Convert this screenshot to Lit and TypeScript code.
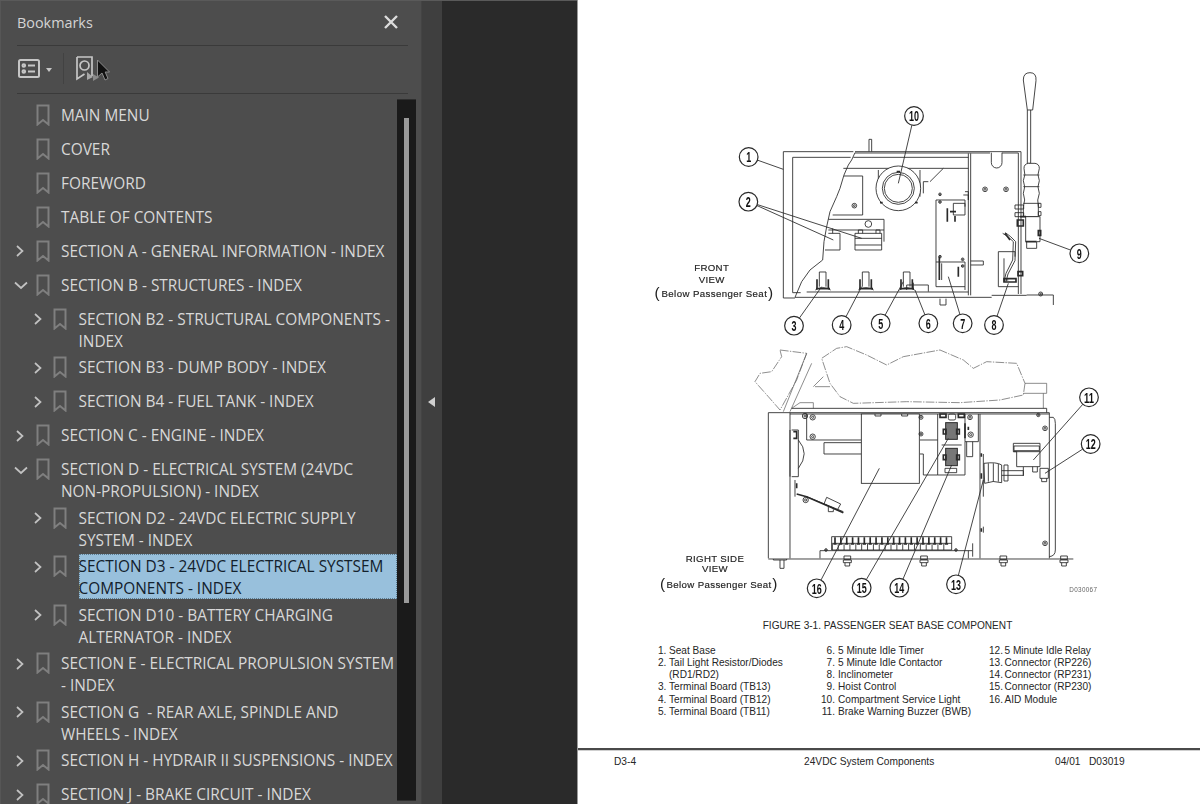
import { LitElement, html, svg, css } from 'lit';
import { customElement } from 'lit/decorators.js';

type Row = { label: string; level: 0 | 1; chevron?: 'right' | 'down'; selected?: boolean };

const rows: Row[] = [
  { label: 'MAIN MENU', level: 0 },
  { label: 'COVER', level: 0 },
  { label: 'FOREWORD', level: 0 },
  { label: 'TABLE OF CONTENTS', level: 0 },
  { label: 'SECTION A - GENERAL INFORMATION - INDEX', level: 0, chevron: 'right' },
  { label: 'SECTION B - STRUCTURES - INDEX', level: 0, chevron: 'down' },
  { label: 'SECTION B2 - STRUCTURAL COMPONENTS - INDEX', level: 1, chevron: 'right' },
  { label: 'SECTION B3 - DUMP BODY - INDEX', level: 1, chevron: 'right' },
  { label: 'SECTION B4 - FUEL TANK - INDEX', level: 1, chevron: 'right' },
  { label: 'SECTION C - ENGINE - INDEX', level: 0, chevron: 'right' },
  { label: 'SECTION D - ELECTRICAL SYSTEM (24VDC NON-\u2060PROPULSION) - INDEX', level: 0, chevron: 'down' },
  { label: 'SECTION D2 - 24VDC ELECTRIC SUPPLY SYSTEM - INDEX', level: 1, chevron: 'right' },
  { label: 'SECTION D3 - 24VDC ELECTRICAL SYSTSEM COMPONENTS - INDEX', level: 1, chevron: 'right', selected: true },
  { label: 'SECTION D10 - BATTERY CHARGING ALTERNATOR - INDEX', level: 1, chevron: 'right' },
  { label: 'SECTION E - ELECTRICAL PROPULSION SYSTEM - INDEX', level: 0, chevron: 'right' },
  { label: 'SECTION G \u00a0- REAR AXLE, SPINDLE AND WHEELS - INDEX', level: 0, chevron: 'right' },
  { label: 'SECTION H - HYDRAIR II SUSPENSIONS - INDEX', level: 0, chevron: 'right' },
  { label: 'SECTION J - BRAKE CIRCUIT - INDEX', level: 0, chevron: 'right' },
];

const legend: [string, string][][] = [
  [['1.', 'Seat Base'], ['2.', 'Tail Light Resistor/Diodes (RD1/RD2)'], ['3.', 'Terminal Board (TB13)'], ['4.', 'Terminal Board (TB12)'], ['5.', 'Terminal Board (TB11)']],
  [['6.', '5 Minute Idle Timer'], ['7.', '5 Minute Idle Contactor'], ['8.', 'Inclinometer'], ['9.', 'Hoist Control'], ['10.', 'Compartment Service Light'], ['11.', 'Brake Warning Buzzer (BWB)']],
  [['12.', '5 Minute Idle Relay'], ['13.', 'Connector (RP226)'], ['14.', 'Connector (RP231)'], ['15.', 'Connector (RP230)'], ['16.', 'AID Module']],
];

// callouts: number, circle x/y, leader end(s), in 3x drawing units
const topCallouts: [string, number, number, number[]][] = [
  ['1', 326, 291, [430, 328]],
  ['2', 325, 425, [580, 540, 665, 535]],
  ['3', 462, 797, [545, 680]],
  ['4', 605, 795, [665, 680]],
  ['5', 722, 790, [790, 665]],
  ['6', 865, 790, [825, 690]],
  ['7', 968, 790, [925, 650]],
  ['8', 1062, 795, [1105, 670]],
  ['9', 1318, 580, [1197, 535]],
  ['10', 822, 168, [775, 370]],
];
const lowCallouts: [string, number, number, number[]][] = [
  ['11', 1347, 172, [1180, 360]],
  ['12', 1352, 312, [1215, 400]],
  ['13', 948, 733, [1030, 420]],
  ['14', 778, 743, [935, 375]],
  ['15', 665, 743, [925, 295]],
  ['16', 530, 745, [718, 385]],
];

const callout = ([n, x, y, ends]: [string, number, number, number[]]) => {
  const leaders = [];
  for (let i = 0; i < ends.length; i += 2) {
    const dx = ends[i] - x;
    const dy = ends[i + 1] - y;
    const d = Math.hypot(dx, dy);
    leaders.push(svg`<line x1=${x + (dx / d) * 28} y1=${y + (dy / d) * 28} x2=${ends[i]} y2=${ends[i + 1]}></line>`);
  }
  return svg`${leaders}<circle class="num" cx=${x} cy=${y} r="28"></circle>
    <text class="numtext" x=${x} y=${y + 16} textLength=${n.length > 1 ? 30 : 15} lengthAdjust="spacingAndGlyphs">${n}</text>`;
};

const bolt = (x: number, y: number, r = 7) => svg`<circle cx=${x} cy=${y} r=${r}></circle><circle cx=${x} cy=${y} r=${r * 0.4}></circle>`;

const terminal = (x: number, y: number) => svg`
  <path d="M${x - 10} ${y + 8}V${y - 36}H${x + 10}V${y + 8}M${x - 22} ${y + 18}Q${x} ${y + 4} ${x + 24} ${y + 18}"></path>
  <path class="heavy" d="M${x - 17} ${y - 14}V${y + 12}M${x + 17} ${y - 14}V${y + 12}M${x - 20} ${y + 14}H${x + 22}"></path>`;

const topFigure = svg`
  <g transform="translate(640 60) scale(.33333)" class="lines">
    <path d="M687 275V238h8v37"></path>
    <path d="M645 275H1143V702M645 279H1050M1086 279H1135V702"></path>
    <path d="M1054 278V308a16 16 0 0 0 32 0V278" class="paper"></path>
    <path d="M640 275H430V714H465M458 292V698H482M458 292H632M640 292H985M610 325H985M985 280V706M992 280V706"></path>
    <path d="M645 278L635 300 625 315 612 345 600 385 590 410 570 455 560 500 552 545 548 600 510 630 485 665 465 712"></path>
    <path d="M465 712H1055M1055 706H1160M500 696H985M1160 705H1240V735"></path>
    <path d="M612 348H668V465H578"></path>
    ${bolt(643, 437)}
    <path d="M715 330V410M840 330V410M850 400V365H865M870 365L910 325"></path>
    <circle cx="775" cy="385" r="67" class="paper"></circle>
    <circle cx="775" cy="385" r="48"></circle>
    <circle cx="775" cy="385" r="42"></circle>
    <path class="heavy" d="M770 335h10M720 428h8M825 428h8"></path>
    <path d="M565 478H732V545M565 510H732"></path>
    <circle cx="685" cy="492" r="10"></circle>
    <path d="M565 520H600V570H555M578 520V505M645 570V520H725V570ZM645 555H725M645 535H725M655 520V510H668V520M708 520V510H720V520"></path>
    ${terminal(548, 672)}${terminal(677, 672)}${terminal(800, 672)}
    <path d="M800 690V675H865V695M820 690V668"></path>
    <path d="M888 420V680H975M888 420H975V440M888 606H975V690M975 395H985V420M905 660V610"></path>
    <path d="M940 430H975V465H940ZM970 405H985V420"></path>
    <path class="heavy" d="M922 445V485M945 468V485M930 455H948M955 620V650M898 590V660"></path>
    ${bolt(900, 403, 4)}${bolt(900, 426, 4)}${bolt(900, 590, 4)}${bolt(968, 598, 4)}${bolt(968, 618, 4)}
    <path d="M992 603H1030V615H992M900 716V735H918V716"></path>
    ${bolt(1035, 388)}${bolt(1098, 388)}
    <path class="paper" d="M1150 60Q1150 38 1170 38 1190 38 1188 62L1178 150H1162Z"></path>
    <path d="M1162 150V310H1172V150"></path>
    <path class="paper" d="M1152 325Q1152 312 1165 310H1185Q1198 312 1198 325 1190 345 1198 362 1190 380 1198 400 1190 420 1195 440L1195 470H1150V440Q1158 420 1150 400 1158 380 1150 362 1158 345 1152 325Z"></path>
    <path d="M1150 345H1198M1150 380H1198M1150 430H1198M1125 435h26v12h-26zM1125 458h26v12h-26zM1195 430h8v12h-8zM1195 455h8v12h-8z"></path>
    <path class="paper" d="M1157 470H1200V545H1190V565H1160V545H1157Z"></path>
    <path class="heavy" d="M1140 470H1158M1157 545H1190M1195 512h7v14h-7z"></path>
    <path d="M1075 575H1125V590M1075 575V680H1135M1092 595V660H1105"></path>
    <path d="M1088 520L1104 530 1120 545 1118 600 1098 640 1092 665M1096 518L1112 530 1127 545 1125 602 1104 642 1098 665"></path>
    <path class="heavy" d="M1095 520L1110 540M1132 480h18v18h-18zM1134 635h14v12h-14zM1092 656h36v10h-36z"></path>
    ${bolt(1202, 702, 6)}
  </g>
  <g transform="translate(640 60) scale(.33333)" class="label">
    <text x="215" y="633">FRONT</text>
    <text x="215" y="668">VIEW</text>
    <text x="223" y="711" textLength="317" lengthAdjust="spacing">Below Passenger Seat</text>
    <text class="big-paren" x="52" y="714">(</text>
    <text class="big-paren" x="392" y="714">)</text>
  </g>
  <g transform="translate(640 60) scale(.33333)" class="lines">
    ${topCallouts.map(callout)}
  </g>
`;

const strip: number[] = [];
for (let x = 585; x < 930; x += 17.6) strip.push(x);

const lowFigure = svg`
  <g transform="translate(640 340) scale(.33333)" class="lines">
    <path class="thin dash" d="M1155 130L1150 165 1080 180 960 188 800 185 640 190 600 170 570 130 545 55 590 25 620 20 680 45 740 75 790 50 900 30 970 60 1000 85 1040 65 1130 70Z"></path>
    <path class="thin dash" d="M420 30L500 40 470 120 420 210 385 170 345 125 360 100 395 95 425 50Z"></path>
    <path class="thin" d="M500 40L430 215M515 70L450 215M1155 130H1220V160H1150M1210 160V205M455 205L480 188H520V205M550 110L520 140M570 140H525"></path>
    <path d="M455 205H1220V218M385 218H1228V655M385 218V655M450 218V655M450 222H1228"></path>
    <path d="M1228 232H1240Q1246 236 1246 250V630Q1246 648 1228 650M385 657H1300M400 657V660H440V657M420 660V685H432V660"></path>
    <path d="M1020 222V655"></path>
    <path d="M500 222V300H664M552 308H664M552 308V342H664"></path>
    <path d="M840 300H893M840 342H850V405H893M980 305V350H998V305"></path>
    <rect class="paper" x="664" y="222" width="174" height="208"></rect>
    <path d="M893 222V405H975V305H1015V222M975 222V305M705 222v6h18v-6M785 222v6h18v-6"></path>
    <path class="heavy" d="M975 250V295M985 260V270M900 222h18v10h-18zM955 222h18v10h-18z"></path>
    ${bolt(495, 228, 8)}${bolt(518, 232, 8)}${bolt(518, 290, 8)}${bolt(843, 232, 6)}${bolt(843, 282, 6)}${bolt(990, 232, 7)}${bolt(992, 284, 8)}
    <rect x="925" y="222" width="22" height="18" rx="5"></rect>
    <rect x="917" y="248" width="35" height="50" class="dark"></rect>
    <path class="heavy" d="M910 268h8v14h-8zM950 268h8v14h-8z"></path>
    <rect x="917" y="325" width="35" height="52" class="dark"></rect>
    <path class="heavy" d="M910 345h8v14h-8zM950 345h8v14h-8z"></path>
    <path d="M905 315H965M915 385H950V398H915Z"></path>
    <path d="M455 270H475V410H455M450 270V410M475 300Q510 340 475 385M465 420V470M500 470L610 515"></path>
    <path class="heavy" d="M470 462L500 470 610 518M460 275H470V295H460M470 430V445"></path>
    <path d="M560 472L602 492 592 510 552 492ZM565 500V515H580V508"></path>
    ${bolt(497, 480, 8)}
    <path d="M575 590H935V630H575ZM575 610H935"></path>
    ${strip.map((x) => svg`<path class="heavy" d="M${x} 592V612M${x - 5} 612h10"></path><path d="M${x - 8} 612V630"></path>`)}
    <path d="M540 655V632H998V610M985 632V655M998 632V650"></path>
    ${bolt(558, 630, 4)}${bolt(948, 630, 4)}
    ${[622, 852, 1090, 1272].map((x) => svg`<path d="M${x - 10} 648h20v10h-20zM${x - 12} 660h24v8h-24zM${x - 7} 668v10h14v-10"></path>`)}
    <path d="M1030 342V470M1030 560V578M1032 370Q1070 365 1085 375V428Q1060 420 1034 430Z"></path>
    <path d="M1045 370V425M1060 370V425M1075 372V425M1085 392H1150V406H1085M1092 375h12v48h-12z"></path>
    <path d="M1150 380V408"></path>
    <path class="paper" d="M1120 310H1200V380H1130V335H1120Z"></path>
    <path d="M1120 335H1200M1122 318H1198V332H1122Z"></path>
    <path d="M1178 380V396H1192V380"></path>
    <path d="M1200 385H1225V415H1200ZM1205 415V425H1220V415"></path>
    ${bolt(1215, 265, 7)}${bolt(1215, 610, 7)}${bolt(1195, 225, 5)}
    <path class="heavy" d="M1024 340v10M1024 400v16M1024 565v10"></path>
  </g>
  <g transform="translate(640 340) scale(.33333)" class="label">
    <text x="225" y="665">RIGHT SIDE</text>
    <text x="225" y="695">VIEW</text>
    <text x="237" y="745" textLength="315" lengthAdjust="spacing">Below Passenger Seat</text>
    <text class="big-paren" x="68" y="748">(</text>
    <text class="big-paren" x="405" y="748">)</text>
    <text class="code" x="1372" y="755">D030067</text>
  </g>
  <g transform="translate(640 340) scale(.33333)" class="lines">
    ${lowCallouts.map(callout)}
  </g>
`;

const bookmarkIcon = html`<svg class="mark" width="14" height="22" viewBox="0 0 14 22">
  <path d="M1.5 1.5H12.5V20.5L7 16 1.5 20.5Z"></path>
</svg>`;

const chevronIcon = (dir: 'right' | 'down') => html`<svg class="chev" width="14" height="14" viewBox="0 0 14 14">
  <path d=${dir === 'right' ? 'M3 2L8.5 7 3 12' : 'M1 4.5L7 10 13 4.5'}></path>
</svg>`;

@customElement('app-root')
export default class AppRoot extends LitElement {
  static override styles = css`
    :host {
      display: block;
      height: 804px;
      overflow: hidden;
      font-family: "Open Sans", "Noto Sans", sans-serif;
    }
    .shell {
      display: flex;
      height: 804px;
      background: #2a2a2a;
      border-top: 1px solid #5a5a5a;
      box-sizing: border-box;
      position: relative;
    }
    .panel {
      width: 422px;
      flex: none;
      box-sizing: border-box;
      background: #4d4d4d;
      border-left: 1px solid #565656;
      border-right: 1px solid #444;
      padding: 0 6px 3px 13px;
      display: flex;
      flex-direction: column;
      position: relative;
    }
    .head {
      height: 45px;
      flex: none;
      margin: 0 7px 0 3px;
      box-sizing: border-box;
      border-bottom: 1px solid #3a3a3a;
      display: flex;
      align-items: center;
      justify-content: space-between;
      padding: 0 10px 2px 0;
      color: #d4d4d4;
      font-size: 14.4px;
    }
    .close {
      display: block;
      margin-top: -1px;
    }
    .close path {
      stroke: #dcdcdc;
      stroke-width: 2.4;
      fill: none;
    }
    .tools {
      height: 48px;
      flex: none;
      margin: 0 7px 0 3px;
      box-sizing: border-box;
      border-bottom: 1px solid #3a3a3a;
      display: flex;
      align-items: center;
      padding: 0 0 2px 1px;
    }
    .tools svg {
      display: block;
      fill: none;
      stroke: #c6c6c6;
    }
    .caret {
      width: 0;
      height: 0;
      margin: 2px 0 0 6px;
      border: 3.5px solid transparent;
      border-top: 4px solid #c6c6c6;
      border-bottom: 0;
    }
    .sep {
      width: 1px;
      height: 31px;
      background: #424242;
      margin: 0 12px 0 11px;
    }
    .cursor {
      position: absolute;
      left: 95px;
      top: 57px;
    }
    .body {
      flex: 1;
      min-height: 0;
      display: flex;
      padding-top: 5px;
    }
    .tree {
      width: 383px;
      flex: none;
      overflow: hidden;
      margin-bottom: -3px;
      padding: 3px 0 0 3px;
      box-sizing: border-box;
      color: #d8d8d8;
      font-size: 15.4px;
      line-height: 22px;
    }
    .row {
      display: flex;
      align-items: flex-start;
      min-height: 34px;
      padding-bottom: 2px;
      box-sizing: border-box;
    }
    .row.sub {
      padding-left: 17.5px;
    }
    .gutter {
      width: 21.5px;
      flex: none;
      height: 26px;
      display: flex;
      align-items: center;
      margin-left: -3px;
    }
    .mark {
      flex: none;
      margin: 1.5px 11.5px 0 0;
      display: block;
    }
    .mark path {
      fill: none;
      stroke: #7f7f7f;
      stroke-width: 2;
    }
    .chev {
      display: block;
    }
    .chev path {
      fill: none;
      stroke: #c2c2c2;
      stroke-width: 1.7;
    }
    .label {
      flex: 1;
      min-width: 0;
      padding-top: 2.5px;
    }
    .label.on {
      position: relative;
      z-index: 0;
      color: #13212c;
    }
    .label.on::before {
      content: '';
      position: absolute;
      inset: 0 0 1.5px;
      z-index: -1;
      background: #98c0dc;
      outline: 1px dotted #5c7a8e;
      outline-offset: -1px;
    }
    .scroll {
      width: 19px;
      flex: none;
      background: #1a1a1a;
      border: 1px solid #2e2e2e;
      border-width: 1px 0;
      box-sizing: border-box;
      padding: 18px 0 0 7px;
    }
    .thumb {
      width: 5px;
      height: 485px;
      background: #9a9a9a;
    }
    .split {
      width: 20px;
      flex: none;
      background: #3f3f3f;
      display: flex;
      align-items: center;
      justify-content: center;
      padding-bottom: 1px;
      box-sizing: border-box;
    }
    .split i {
      width: 0;
      height: 0;
      border: 5.5px solid transparent;
      border-left: 0;
      border-right: 7px solid #cfcfcf;
      margin-left: -1px;
    }
    .gap {
      width: 135px;
      flex: none;
    }
    .page {
      flex: 1;
      min-width: 0;
      margin-top: -1px;
      background: #fff;
      border-left: 1px solid #9a9a9a;
      box-sizing: border-box;
      display: flex;
      flex-direction: column;
      color: #262626;
      font-family: "Liberation Sans", Arial, sans-serif;
    }
    .page svg {
      display: block;
      flex: none;
      filter: blur(.35px);
    }
    .lines {
      fill: none;
      stroke: #2a2a2a;
      stroke-width: 2.6;
    }
    .lines .thin {
      stroke-width: 2;
      stroke: #555;
    }
    .lines .dash {
      stroke-dasharray: 26 4 4 4;
    }
    .lines .heavy {
      stroke-width: 5;
    }
    .lines .paper {
      fill: #fff;
    }
    .lines .dark {
      fill: #777;
      stroke-width: 3;
    }
    .lines .num {
      fill: #fff;
      stroke-width: 3.6;
    }
    .numtext {
      fill: #111;
      stroke: none;
      font: bold 46px "Liberation Sans", sans-serif;
      text-anchor: middle;
    }
    .label text {
      fill: #222;
      stroke: #222;
      stroke-width: .5;
      font: 29px "Liberation Sans", sans-serif;
      text-anchor: middle;
      letter-spacing: 1px;
    }
    .label .big-paren {
      font-size: 46px;
      stroke: none;
    }
    .label .code {
      font-size: 19px;
      fill: #666;
      stroke: none;
      text-anchor: end;
    }
    .caption {
      text-align: center;
      font-size: 10.1px;
      line-height: 12px;
      margin: 4px 0 13px;
      padding-right: 3px;
      height: 12px;
    }
    .legend {
      display: flex;
      height: 82px;
      font-size: 10.1px;
      line-height: 12.15px;
    }
    .col {
      flex: none;
    }
    .col.a { width: 161.5px; margin-left: 80px; }
    .col.b { width: 169.5px; }
    .col.c { width: 200px; }
    .item {
      display: flex;
    }
    .n {
      flex: none;
      width: 11px;
      white-space: nowrap;
    }
    .col.b .n { width: 15.5px; text-align: right; }
    .col.b .t { padding-left: 3px; }
    .col.c .n { width: 15.5px; }
    .foot {
      margin-top: 21px;
      border-top: 2px solid #4a4a4a;
      box-shadow: 0 1px 0 #cfcfcf inset;
      display: flex;
      font-size: 10.2px;
      line-height: 12px;
      padding: 6px 0 0 36px;
    }
    .foot span:nth-child(1) { width: 190px; }
    .foot span:nth-child(2) { width: 251px; }
    .foot span:nth-child(3) { white-space: pre; }
  `;

  override render() {
    return html`
      <div class="shell">
        <aside class="panel">
          <header class="head">
            <span>Bookmarks</span>
            <svg class="close" width="14" height="14" viewBox="0 0 14 14"><path d="M1 1L13 13M13 1L1 13"></path></svg>
          </header>
          <div class="tools">
            <svg width="22" height="20" viewBox="0 0 22 20" stroke-width="2">
              <rect x="1" y="1" width="20" height="17" rx="1.5"></rect>
              <path d="M10 6.5H17M10 12.5H17"></path>
              <circle cx="5.8" cy="6.5" r="1.3"></circle>
              <circle cx="5.8" cy="12.5" r="1.3"></circle>
            </svg>
            <span class="caret"></span>
            <span class="sep"></span>
            <svg width="24" height="26" viewBox="0 0 24 26" stroke-width="1.7">
              <path d="M1 1H16V20M1 1V23L8.5 18"></path>
              <circle cx="8.5" cy="9.5" r="4.5"></circle>
              <path d="M11 16L17 21 11 24Z" fill="#a8a8a8" stroke="none"></path>
              <path d="M17 18L23 21.5 17 25Z" fill="#8a8a8a" stroke="none"></path>
            </svg>
          </div>
          <svg class="cursor" width="14" height="24" viewBox="0 0 14 24">
            <path d="M1.5 2V19L6 15 9 22 12 20.5 9.2 14H13.5Z" fill="#111" stroke="#8c8c8c" stroke-width="1"></path>
          </svg>
          <div class="body">
            <div class="tree">
              ${rows.map(
                (r) => html`
                  <div class="row ${r.level ? 'sub' : ''}">
                    <span class="gutter">${r.chevron ? chevronIcon(r.chevron) : ''}</span>
                    ${bookmarkIcon}
                    <span class="label ${r.selected ? 'on' : ''}">${r.label}</span>
                  </div>
                `,
              )}
            </div>
            <div class="scroll"><div class="thumb"></div></div>
          </div>
        </aside>
        <div class="split"><i></i></div>
        <div class="gap"></div>
        <main class="page">
          <svg width="622" height="616" viewBox="578 0 622 616">${topFigure}${lowFigure}</svg>
          <div class="caption">FIGURE 3-1. PASSENGER SEAT BASE COMPONENT</div>
          <div class="legend">
            ${legend.map(
              (col, i) => html`
                <div class="col ${['a', 'b', 'c'][i]}">
                  ${col.map(([n, t]) => html`<div class="item"><span class="n">${n}</span><span class="t">${t}</span></div>`)}
                </div>
              `,
            )}
          </div>
          <footer class="foot">
            <span>D3-4</span>
            <span>24VDC System Components</span>
            <span>04/01   D03019</span>
          </footer>
        </main>
      </div>
    `;
  }
}
